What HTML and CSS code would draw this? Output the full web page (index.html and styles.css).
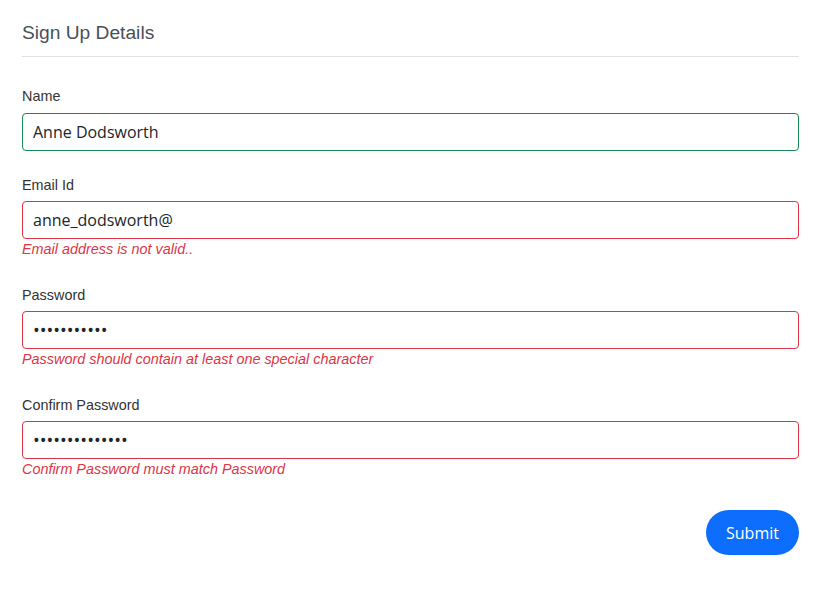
FILE: index.html
```html
<!DOCTYPE html>
<html>
<head>
<meta charset="utf-8">
<link rel="stylesheet" href="styles.css">
</head>
<body>
<div class="page">
  <h2 class="title">Sign Up Details</h2>
  <form class="form">
    <div class="group first">
      <label class="label">Name</label>
      <input class="field valid" type="text" value="Anne Dodsworth">
    </div>
    <div class="group">
      <label class="label">Email Id</label>
      <input class="field invalid" type="text" value="anne_dodsworth@">
      <div class="error">Email address is not valid..</div>
    </div>
    <div class="group">
      <label class="label">Password</label>
      <input class="field invalid secret" type="password" value="abcdefghijk">
      <div class="error">Password should contain at least one special character</div>
    </div>
    <div class="group">
      <label class="label">Confirm Password</label>
      <input class="field invalid secret" type="password" value="abcdefghijklmn">
      <div class="error">Confirm Password must match Password</div>
    </div>
    <div class="actions">
      <button type="button" class="submit">Submit</button>
    </div>
  </form>
</div>
</body>
</html>
```
FILE: styles.css
```css
* { box-sizing: border-box; }
html, body { margin: 0; padding: 0; background: #fff; }
body { font-family: "Liberation Sans", Arial, sans-serif; color: #212529; }
.page { width: 777px; margin-left: 22px; padding-top: 21px; }
.title {
  margin: 0;
  font-size: 19.2px;
  line-height: 23px;
  font-weight: normal;
  color: #495057;
  padding-bottom: 12px;
  border-bottom: 1px solid #dee2e6;
}
.form { display: flex; flex-direction: column; padding-top: 31px; }
.group { display: flex; flex-direction: column; margin-bottom: 26px; }
.label {
  font-size: 14.4px;
  line-height: 16px;
  color: #333;
  margin-bottom: 8px;
}
.group.first .label { margin-bottom: 9px; }
.field {
  height: 38px;
  width: 100%;
  border: 1px solid #ced4da;
  border-radius: 4px;
  padding: 0 10px;
  font-family: "Open Sans", "Noto Sans", sans-serif;
  font-size: 16px;
  color: #212529;
  outline: none;
  background: #fff;
}
.field.secret { font-size: 18px; }
.field.valid { border-color: #198754; }
.field.invalid { border-color: #dc3545; }
.error {
  font-size: 14.4px;
  line-height: 20px;
  font-style: italic;
  color: #dc3545;
  margin-bottom: 2px;
}
.actions { display: flex; justify-content: flex-end; margin-top: 3px; }
.submit {
  width: 93px;
  height: 45px;
  border: none;
  border-radius: 23px;
  background: #0d6efd;
  color: #fff;
  font-family: "Open Sans", "Noto Sans", sans-serif;
  font-size: 16px;
  cursor: pointer;
}
```
